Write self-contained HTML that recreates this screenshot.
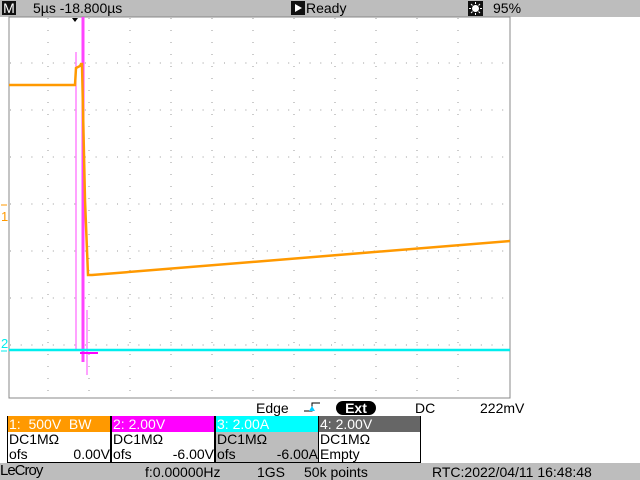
<!DOCTYPE html><html><head><style>
*{margin:0;padding:0;box-sizing:border-box}
body{width:640px;height:480px;background:#fff;position:relative;overflow:hidden;font-family:"Liberation Sans",sans-serif;font-size:14px;color:#000}
.a{position:absolute;white-space:pre;line-height:16px}
.box{position:absolute;top:416px;width:104px;height:47px;border:1px solid #000;border-top:none}
.h{height:16px;line-height:16px;padding-left:1px;font-size:14px;white-space:pre}
.r{height:15px;line-height:15px;padding-left:1px;white-space:pre;display:flex;justify-content:space-between}
</style></head><body>
<div style="position:absolute;left:0;top:0;width:640px;height:17px;background:#bdbdbd"></div>
<div class="a" style="left:2px;top:1px;width:14px;height:14px;background:#111;color:#fff;text-align:center;line-height:14px">M</div>
<div class="a" style="left:33px;top:0">5µs -18.800µs</div>
<div class="a" style="left:291px;top:1px;width:14px;height:14px;background:#111"></div>
<svg style="position:absolute;left:291px;top:1px" width="14" height="14"><path d="M4 3L11 7L4 11Z" fill="#fff"/></svg>
<div class="a" style="left:306px;top:0">Ready</div>
<svg style="position:absolute;left:468px;top:1px" width="15" height="15"><rect width="15" height="15" fill="#111"/><circle cx="7.5" cy="7.5" r="3.5" fill="#fff"/><path d="M7.5 1v2M7.5 12v2M1 7.5h2M12 7.5h2M3 3l1.5 1.5M12 3l-1.5 1.5M3 12l1.5-1.5M12 12l-1.5-1.5" stroke="#fff"/></svg>
<div class="a" style="left:493px;top:0">95%</div>
<svg style="position:absolute;left:0;top:0" width="640" height="416">
<rect x="9" y="17" width="501" height="381" fill="none" stroke="#888"/>
<path d="M48,18V397M89,18V397M130,18V397M171,18V397M212,18V397M253,18V397M294,18V397M335,18V397M376,18V397M417,18V397M458,18V397" stroke="#999" stroke-dasharray="1 11"/>
<path d="M10,63H510M10,110H510M10,157H510M10,204H510M10,251H510M10,298H510M10,345H510" stroke="#999" stroke-dasharray="1 9.7"/>
<path d="M72,18l3,4l3-4z" fill="#000"/>
<line x1="76" y1="52" x2="76" y2="350" stroke="#f4f" stroke-width="1"/>
<line x1="83" y1="17" x2="83" y2="362" stroke="#f4f" stroke-width="3"/>
<line x1="87" y1="310" x2="87" y2="375" stroke="#f4f" stroke-width="1"/>
<path d="M9,85H75L76,68L80,66L81,64L82,64L85,200L88,275H92L510,241" fill="none" stroke="#f90" stroke-width="2.5"/>
<path d="M9,350H510" stroke="#0ee" stroke-width="2.5"/>
<path d="M80,353H98" stroke="#f0f" stroke-width="2"/>
<path d="M1,205H7" stroke="#f90"/><path d="M1,351H7" stroke="#0ee"/>
<text x="1" y="221" fill="#f90" font-family="Liberation Sans" font-size="13">1</text>
<text x="1" y="348" fill="#0ee" font-family="Liberation Sans" font-size="13">2</text>
<path d="M304,411H312V403H320" fill="none" stroke="#000"/><path d="M309,411l3-5l3,5z" fill="#0cf"/>
</svg>
<div class="a" style="left:256px;top:400px">Edge</div>
<div class="a" style="left:336px;top:401px;width:40px;height:14px;background:#000;color:#fff;border-radius:7px;text-align:center;line-height:14px;font-weight:bold">Ext</div>
<div class="a" style="left:415px;top:400px">DC</div>
<div class="a" style="left:480px;top:400px">222mV</div>
<div class="box" style="left:7px"><div class="h" style="background:#f90;color:#fff">1:  500V  BW</div><div class="r">DC1MΩ</div><div class="r"><span>ofs</span><span>0.00V</span></div></div>
<div class="box" style="left:111px"><div class="h" style="background:#f0f;color:#fff">2: 2.00V</div><div class="r">DC1MΩ</div><div class="r"><span>ofs</span><span>-6.00V</span></div></div>
<div class="box" style="left:215px;background:#bdbdbd"><div class="h" style="background:#0ff;color:#fff">3: 2.00A</div><div class="r">DC1MΩ</div><div class="r"><span>ofs</span><span>-6.00A</span></div></div>
<div class="box" style="left:318px;width:103px"><div class="h" style="background:#666;color:#fff">4: 2.00V</div><div class="r">DC1MΩ</div><div class="r">Empty</div></div>
<div style="position:absolute;left:0;top:463px;width:640px;height:17px;background:#bdbdbd"></div>
<div class="a" style="left:0;top:463px;font-size:15px;letter-spacing:-1px">LeCroy</div>
<div class="a" style="left:145px;top:464px">f:0.00000Hz</div>
<div class="a" style="left:257px;top:464px">1GS</div>
<div class="a" style="left:304px;top:464px">50k points</div>
<div class="a" style="left:432px;top:464px">RTC:2022/04/11 16:48:48</div>
</body></html>
